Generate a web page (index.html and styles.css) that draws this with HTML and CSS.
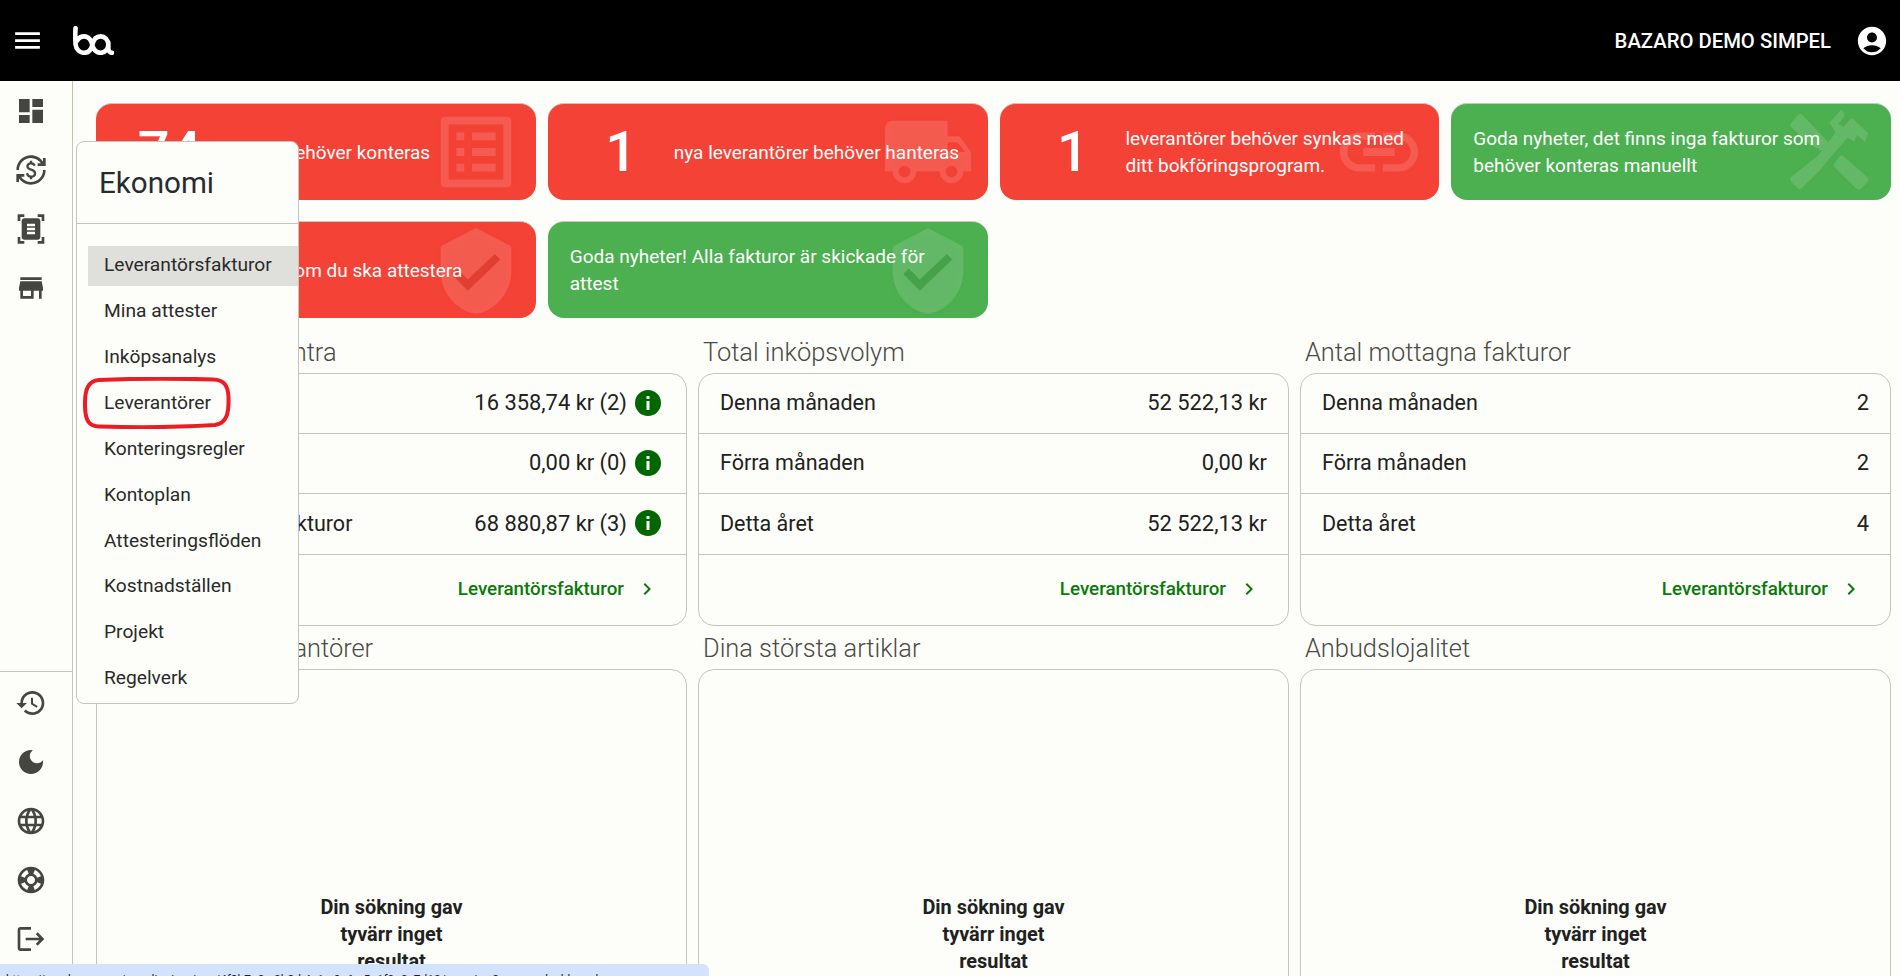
FILE: index.html
```html
<!DOCTYPE html>
<html lang="sv">
<head>
<meta charset="utf-8">
<title>Bazaro</title>
<link rel="stylesheet" href="styles.css">
</head>
<body>
<header class="topbar">
  <svg class="menu-icon" viewBox="0 0 24 24"><path d="M3 18h18v-2H3v2zm0-5h18v-2H3v2zm0-7v2h18V6H3z"/></svg>
  <svg class="logo" viewBox="0 0 40 28"><path d="M2.500 2 C2 8 2.300 14 2.500 18 C3 23 7 26 11 26 C16 26 18 22 19 18 C20 13 23 10 27 10 C31 10 34.500 13.500 34.500 18 C34.500 22.500 31 26 27 26 C23 26 20 23 19 19 C18 14 15 10 11 10 C8 10 5.500 11.500 4 14 M34.500 16 V22 C34.500 24 36 26 38 26"/></svg>
  <div class="spacer"></div>
  <span class="company">BAZARO DEMO SIMPEL</span>
  <svg class="account-icon" viewBox="0 0 24 24"><path d="M12 2C6.48 2 2 6.48 2 12s4.48 10 10 10 10-4.48 10-10S17.52 2 12 2zm0 4c1.93 0 3.5 1.57 3.5 3.5S13.93 13 12 13s-3.5-1.57-3.5-3.5S10.07 6 12 6zm0 14c-2.03 0-4.43-.82-6.14-2.88C7.55 15.8 9.68 15 12 15s4.45.8 6.14 2.12C16.43 19.18 14.03 20 12 20z"/></svg>
</header>

<div class="body-row">
  <aside class="sidebar">
    <nav class="side-group">
      <svg class="side-icon" viewBox="0 0 24 24"><path d="M3 13h8V3H3v10zm0 8h8v-6H3v6zm10 0h8V11h-8v10zm0-18v6h8V3h-8z"/></svg>
      <svg class="side-icon" viewBox="0 0 24 24"><path d="M12.89 11.1c-1.78-.59-2.64-.96-2.64-1.9 0-1.02 1.11-1.39 1.81-1.39 1.31 0 1.79.99 1.9 1.34l1.58-.67c-.15-.44-.82-1.91-2.66-2.23V5h-1.75v1.26c-2.6.56-2.62 2.85-2.62 2.96 0 2.27 2.25 2.91 3.35 3.31 1.58.56 2.28 1.07 2.28 2.03 0 1.13-1.05 1.61-1.98 1.61-1.82 0-2.34-1.87-2.4-2.09l-1.66.67c.63 2.19 2.28 2.78 3.02 2.96V19h1.75v-1.24c.52-.09 3.02-.59 3.02-3.22.01-1.39-.6-2.61-3-3.44zM3 21H1v-6h6v2H4.52c1.61 2.41 4.36 4 7.48 4 4.97 0 9-4.03 9-9h2c0 6.08-4.92 11-11 11-3.72 0-7.01-1.85-9-4.67V21zm-2-9C1 5.92 5.92 1 12 1c3.72 0 7.01 1.85 9 4.67V3h2v6h-6V7h2.48C17.87 4.59 15.12 3 12 3c-4.97 0-9 4.03-9 9H1z"/></svg>
      <svg class="side-icon" viewBox="0 0 24 24"><path fill-rule="evenodd" d="M7 3H4v3H2V1h5v2zm15 3V1h-5v2h3v3h2zM7 21H4v-3H2v5h5v-2zm13-3v3h-3v2h5v-5h-2zM19 18c0 1.1-.9 2-2 2H7c-1.1 0-2-.9-2-2V6c0-1.1.9-2 2-2h10c1.1 0 2 .9 2 2v12zM15 8H9v2h6V8zm0 3H9v2h6v-2zm0 3H9v2h6v-2z"/></svg>
      <svg class="side-icon" viewBox="0 0 24 24"><path d="M20 4H4v2h16V4zm1 10v-2l-1-5H4l-1 5v2h1v6h10v-6h4v6h2v-6h1zm-9 4H6v-4h6v4z"/></svg>
    </nav>
    <nav class="side-group side-bottom">
      <svg class="side-icon" viewBox="0 0 24 24"><path d="M13 3c-4.97 0-9 4.03-9 9H1l3.89 3.89.07.14L9 12H6c0-3.87 3.13-7 7-7s7 3.13 7 7-3.13 7-7 7c-1.93 0-3.68-.79-4.94-2.06l-1.42 1.42C8.27 19.99 10.51 21 13 21c4.97 0 9-4.03 9-9s-4.03-9-9-9zm-1 5v5l4.28 2.54.72-1.21-3.5-2.08V8H12z"/></svg>
      <svg class="side-icon" viewBox="0 0 24 24"><path d="M12 3c-4.97 0-9 4.03-9 9s4.03 9 9 9 9-4.03 9-9c0-.46-.04-.92-.1-1.36-.98 1.37-2.58 2.26-4.4 2.26-2.98 0-5.4-2.42-5.4-5.4 0-1.81.89-3.42 2.26-4.4-.44-.06-.9-.1-1.36-.1z"/></svg>
      <svg class="side-icon" viewBox="0 0 24 24"><path d="M11.99 2C6.47 2 2 6.48 2 12s4.47 10 9.99 10C17.52 22 22 17.52 22 12S17.52 2 11.99 2zm6.93 6h-2.95c-.32-1.25-.78-2.45-1.38-3.56 1.84.63 3.37 1.91 4.33 3.56zM12 4.04c.83 1.2 1.48 2.53 1.91 3.96h-3.82c.43-1.43 1.08-2.76 1.91-3.96zM4.26 14C4.1 13.36 4 12.69 4 12s.1-1.36.26-2h3.38c-.08.66-.14 1.32-.14 2 0 .68.06 1.34.14 2H4.26zm.82 2h2.95c.32 1.25.78 2.45 1.38 3.56-1.84-.63-3.37-1.9-4.33-3.56zm2.95-8H5.08c.96-1.66 2.49-2.93 4.33-3.56C8.81 5.55 8.35 6.75 8.03 8zM12 19.96c-.83-1.2-1.48-2.53-1.91-3.96h3.82c-.43 1.43-1.08 2.76-1.91 3.96zM14.34 14H9.66c-.09-.66-.16-1.32-.16-2 0-.68.07-1.35.16-2h4.68c.09.65.16 1.32.16 2 0 .68-.07 1.34-.16 2zm.25 5.56c.6-1.11 1.06-2.31 1.38-3.56h2.95c-.96 1.65-2.49 2.93-4.33 3.56zM16.36 14c.08-.66.14-1.32.14-2 0-.68-.06-1.34-.14-2h3.38c.16.64.26 1.31.26 2s-.1 1.36-.26 2h-3.38z"/></svg>
      <svg class="side-icon" viewBox="0 0 24 24"><path d="M12 2C6.48 2 2 6.48 2 12s4.48 10 10 10 10-4.48 10-10S17.52 2 12 2zm7.46 7.12l-2.78 1.15c-.51-1.36-1.58-2.44-2.95-2.94l1.15-2.78c2.1.8 3.77 2.47 4.58 4.57zM12 15c-1.66 0-3-1.34-3-3s1.34-3 3-3 3 1.34 3 3-1.34 3-3 3zM9.13 4.54l1.17 2.78c-1.38.5-2.47 1.59-2.98 2.97L4.54 9.13c.81-2.11 2.48-3.78 4.59-4.59zM4.54 14.87l2.78-1.15c.51 1.38 1.59 2.46 2.97 2.96l-1.17 2.78c-2.1-.81-3.77-2.48-4.58-4.59zm10.34 4.59l-1.15-2.78c1.37-.51 2.45-1.59 2.95-2.97l2.78 1.17c-.81 2.1-2.48 3.77-4.58 4.58z"/></svg>
      <svg class="side-icon" viewBox="0 0 24 24"><path d="M17 7l-1.41 1.41L18.17 11H8v2h10.17l-2.58 2.58L17 17l5-5zM4 5h8V3H4c-1.1 0-2 .9-2 2v14c0 1.1.9 2 2 2h8v-2H4V5z"/></svg>
    </nav>
  </aside>

  <main class="content">
    <section class="cards">
      <article class="card red">
        <svg class="card-icon" viewBox="0 0 24 24"><path d="M19 5v14H5V5h14m1.1-2H3.9c-.5 0-.9.4-.9.9v16.2c0 .4.4.9.9.9h16.2c.4 0 .9-.5.9-.9V3.9c0-.5-.5-.9-.9-.9zM11 7h6v2h-6V7zm0 4h6v2h-6v-2zm0 4h6v2h-6zM7 7h2v2H7zm0 4h2v2H7zm0 4h2v2H7z"/></svg>
        <span class="num">74</span><p class="card-text indent">fakturor behöver konteras</p>
      </article>
      <article class="card red">
        <svg class="card-icon" viewBox="0 0 24 24"><path d="M20 8h-3V4H3c-1.1 0-2 .9-2 2v11h2c0 1.66 1.34 3 3 3s3-1.34 3-3h6c0 1.66 1.34 3 3 3s3-1.34 3-3h2v-5l-3-4zM6 18.5c-.83 0-1.5-.67-1.5-1.5s.67-1.5 1.5-1.5 1.5.67 1.5 1.5-.67 1.5-1.5 1.5zm13.5-9l1.96 2.5H17V9.5h2.5zm-1.5 9c-.83 0-1.5-.67-1.5-1.5s.67-1.5 1.5-1.5 1.5.67 1.5 1.5-.67 1.5-1.5 1.5z"/></svg>
        <span class="num">1</span><p class="card-text">nya leverantörer behöver hanteras</p>
      </article>
      <article class="card red">
        <svg class="card-icon" viewBox="0 0 24 24"><path d="M3.9 12c0-1.71 1.39-3.1 3.1-3.1h4V7H7c-2.76 0-5 2.24-5 5s2.24 5 5 5h4v-1.9H7c-1.71 0-3.1-1.39-3.1-3.1zM8 13h8v-2H8v2zm9-6h-4v1.9h4c1.71 0 3.1 1.39 3.1 3.1s-1.39 3.1-3.1 3.1h-4V17h4c2.76 0 5-2.24 5-5s-2.24-5-5-5z"/></svg>
        <span class="num">1</span><p class="card-text">leverantörer behöver synkas med ditt bokföringsprogram.</p>
      </article>
      <article class="card green">
        <svg class="card-icon" viewBox="0 0 24 24"><path d="M14.700 1.100 15.600 2.800 13.900 4.800 15.200 5.600 17.300 3.200 21.500 7.200 20.700 9.400 18.700 7.700 17.900 9.400 16.200 8.300 11.300 14 9.600 16.200 4.600 21.200Q4 21.800 3.400 21.200L1.800 19.600Q1.200 19 1.800 18.400L8.800 12.800 13.200 7 11.600 4.500zM1.800 4.500 3.600 2.500Q4.100 2 4.600 2.500L9 7 11.700 10 10.200 12 6.500 10 1.800 5.600Q1.300 5 1.800 4.500zM14.200 13.100Q14.700 12.600 15.200 13.100L21.400 18.600Q21.800 19.100 21.400 19.600L19.600 21.400Q19 21.900 18.500 21.400L12.900 15.900Q12.400 15.300 12.900 14.900z"/></svg>
        <p class="card-text full">Goda nyheter, det finns inga fakturor som behöver konteras manuellt</p>
      </article>
      <article class="card red">
        <svg class="card-icon" viewBox="0 0 24 24"><path fill-rule="evenodd" d="M12 1.300 3 6v6.500c0 5 3.800 9.800 9 10.700 5.200-.9 9-5.700 9-10.700V6zM5.700 13 7.100 11.600 9.900 14.400 16.800 7.900 18.200 9.300 9.900 17.300z"/><path class="check" d="M5.700 13 7.100 11.600 9.900 14.400 16.800 7.900 18.200 9.300 9.900 17.300z"/></svg>
        <span class="num">2</span><p class="card-text indent">fakturor som du ska attestera</p>
      </article>
      <article class="card green">
        <svg class="card-icon" viewBox="0 0 24 24"><path fill-rule="evenodd" d="M12 1.300 3 6v6.500c0 5 3.800 9.800 9 10.700 5.200-.9 9-5.700 9-10.700V6zM5.700 13 7.100 11.600 9.900 14.400 16.800 7.900 18.200 9.300 9.900 17.300z"/><path class="check" d="M5.700 13 7.100 11.600 9.900 14.400 16.800 7.900 18.200 9.300 9.900 17.300z"/></svg>
        <p class="card-text full">Goda nyheter! Alla fakturor är skickade för attest</p>
      </article>
    </section>

    <section class="panels">
      <div class="panel-col">
        <h2 class="panel-title">Leverantörsreskontra</h2>
        <div class="panel">
          <div class="row"><span>Förfallet</span><span class="val">16 358,74 kr (2)<svg class="info" viewBox="0 0 26 26"><circle cx="13" cy="13" r="13"/><rect class="info-i" x="11.500" y="11" width="3" height="9"/><rect class="info-i" x="11.500" y="6" width="3" height="3"/></svg></span></div>
          <div class="row"><span>Inom 30 dagar</span><span class="val">0,00 kr (0)<svg class="info" viewBox="0 0 26 26"><circle cx="13" cy="13" r="13"/><rect class="info-i" x="11.500" y="11" width="3" height="9"/><rect class="info-i" x="11.500" y="6" width="3" height="3"/></svg></span></div>
          <div class="row"><span>Totalt ej betalda fakturor</span><span class="val">68 880,87 kr (3)<svg class="info" viewBox="0 0 26 26"><circle cx="13" cy="13" r="13"/><rect class="info-i" x="11.500" y="11" width="3" height="9"/><rect class="info-i" x="11.500" y="6" width="3" height="3"/></svg></span></div>
          <div class="foot"><a class="foot-link">Leverantörsfakturor<svg class="chev" viewBox="0 0 24 24"><path d="M10 6 8.590 7.410 13.170 12l-4.580 4.590L10 18l6-6z"/></svg></a></div>
        </div>
      </div>
      <div class="panel-col">
        <h2 class="panel-title">Total inköpsvolym</h2>
        <div class="panel">
          <div class="row"><span>Denna månaden</span><span class="val">52 522,13 kr</span></div>
          <div class="row"><span>Förra månaden</span><span class="val">0,00 kr</span></div>
          <div class="row"><span>Detta året</span><span class="val">52 522,13 kr</span></div>
          <div class="foot"><a class="foot-link">Leverantörsfakturor<svg class="chev" viewBox="0 0 24 24"><path d="M10 6 8.590 7.410 13.170 12l-4.580 4.590L10 18l6-6z"/></svg></a></div>
        </div>
      </div>
      <div class="panel-col">
        <h2 class="panel-title">Antal mottagna fakturor</h2>
        <div class="panel">
          <div class="row"><span>Denna månaden</span><span class="val">2</span></div>
          <div class="row"><span>Förra månaden</span><span class="val">2</span></div>
          <div class="row"><span>Detta året</span><span class="val">4</span></div>
          <div class="foot"><a class="foot-link">Leverantörsfakturor<svg class="chev" viewBox="0 0 24 24"><path d="M10 6 8.590 7.410 13.170 12l-4.580 4.590L10 18l6-6z"/></svg></a></div>
        </div>
      </div>
      <div class="panel-col">
        <h2 class="panel-title">Dina största leverantörer</h2>
        <div class="panel tall"><p class="empty">Din sökning gav tyvärr inget resultat</p></div>
      </div>
      <div class="panel-col">
        <h2 class="panel-title">Dina största artiklar</h2>
        <div class="panel tall"><p class="empty">Din sökning gav tyvärr inget resultat</p></div>
      </div>
      <div class="panel-col">
        <h2 class="panel-title">Anbudslojalitet</h2>
        <div class="panel tall"><p class="empty">Din sökning gav tyvärr inget resultat</p></div>
      </div>
    </section>
  </main>
</div>

<div class="flyout">
  <h3 class="flyout-title">Ekonomi</h3>
  <ul class="flyout-list">
    <li class="active">Leverantörsfakturor</li>
    <li>Mina attester</li>
    <li>Inköpsanalys</li>
    <li>Leverantörer</li>
    <li>Konteringsregler</li>
    <li>Kontoplan</li>
    <li>Attesteringsflöden</li>
    <li class="short">Kostnadställen</li>
    <li>Projekt</li>
    <li>Regelverk</li>
  </ul>
</div>
<svg class="ring" viewBox="0 0 148 52"><path d="M16 3 C50 1.500 100 1.500 130 2.500 C141 3 145 8 145.500 20 C146 36 144 46 132 48 C100 50 50 50.500 16 49.500 C6 49 2.500 44 2 30 C1.500 12 5 4 16 3z"/></svg>
<div class="status-bubble">https://app.bazaro.se/supplier-invoices/4f8b7c2a-0b3d-4c1e-9e6a-5a1f0c2e7d10/overview?source=dashboard</div>
</body>
</html>
```
FILE: styles.css
```css
* { box-sizing: border-box; }
html, body { margin: 0; height: 100%; overflow: hidden; }
body { background: #fdfef9; font-family: Roboto, "Liberation Sans", sans-serif; color: #212121; }

.topbar { height: 81px; background: #000; display: flex; align-items: center; padding: 0 11px; }
.menu-icon { width: 33px; height: 33px; fill: #fff; }
.logo { width: 41px; height: 29px; margin-left: 29px; fill: none; stroke: #fff; stroke-width: 4.5; stroke-linecap: round; }
.spacer { flex: 1; }
.company { color: #fff; font-size: 20.3px; font-weight: 500; margin-right: 24px; }
.account-icon { width: 34px; height: 34px; fill: #fff; }

.body-row { display: flex; height: 895px; }
.sidebar { width: 73px; flex: none; border-right: 1px solid #c4c6bc; border-image: linear-gradient(#b7c7a7 60px, #c4c6bc 60px) 1; display: flex; flex-direction: column; justify-content: space-between; }
.side-group { display: flex; flex-direction: column; align-items: flex-start; gap: 27px; padding: 14px 0 0 15px; }
.side-bottom { border-top: 1px solid #c4c6bc; padding-top: 15px; padding-bottom: 21px; }
.side-icon { width: 32px; height: 32px; fill: #45463f; flex: none; }

.content { flex: 1; padding: 22px 9px 0 23px; overflow: hidden; }
.cards { display: grid; grid-template-columns: repeat(4, 1fr); gap: 21px 12px; }
.card { position: relative; height: 97px; border-radius: 16px; border-top: 1px solid #c9c9bc; display: flex; align-items: center; color: #fff; overflow: hidden; }
.red { background: #f44336; }
.green { background: #4caf50; }
.num { flex: none; width: 147px; margin-right: -21px; text-align: center; font-size: 56px; font-weight: 500; line-height: 1; position: relative; }
.card-text { margin: 0; font-size: 19px; font-weight: 400; line-height: 27px; width: 300px; position: relative; }
.card-text.indent { margin-left: -9px; }
.card-text.full { margin-left: 22px; width: 380px; }
.card-icon { position: absolute; right: 13px; top: 1px; width: 94px; height: 94px; fill: rgba(255,255,255,.13); filter: drop-shadow(0 0 6px rgba(0,0,0,.06)); }
.card-icon .check { fill: rgba(0,0,0,.07); }

.panels { display: grid; grid-template-columns: repeat(3, 1fr); gap: 5px 11px; margin-top: 17px; }
.panel-title { margin: 0 0 3px; font-size: 25.4px; font-weight: 300; line-height: 35px; color: #4a4a45; padding-left: 5px; }
.panel { border: 1px solid #c4c6bc; border-radius: 16px; display: flex; flex-direction: column; }
.panel.tall { height: 400px; display: block; position: relative; }
.row { height: 60px; display: flex; justify-content: space-between; align-items: center; padding: 0 21px 2px; border-bottom: 1px solid #c4c6bc; font-size: 21.5px; }
.row:nth-child(3) { height: 61px; }
.val { display: inline-flex; align-items: center; gap: 8px; font-size: 21.9px; font-weight: 450; }
.info { width: 26px; height: 26px; fill: #006600; margin-right: 4px; }
.info-i { fill: #fdfef9; }
.foot { height: 70px; display: flex; align-items: center; justify-content: flex-end; padding: 0 27px 2px 21px; }
.foot-link { display: inline-flex; align-items: center; gap: 11px; color: #0a7a0a; font-size: 18.8px; font-weight: 500; }
.chev { width: 24px; height: 24px; fill: #0a7a0a; }
.empty { position: absolute; top: 224px; left: 50%; transform: translateX(-50%); margin: 0; width: 168px; text-align: center; font-weight: 700; font-size: 19.9px; line-height: 27px; }

.flyout { position: absolute; z-index: 10; left: 76px; top: 141px; width: 223px; height: 563px; background: #fdfef9; border: 1px solid #c4c6bc; border-radius: 8px; }
.flyout-title { margin: 0; height: 82px; display: flex; align-items: center; padding-left: 22px; font-size: 29.6px; font-weight: 400; color: #272b30; border-bottom: 1px solid #c4c6bc; }
.flyout-list { list-style: none; margin: 22px 0 0 11px; padding: 0; }
.flyout-list li { height: 46px; display: flex; align-items: center; padding: 0 0 4px 16px; font-size: 19.2px; color: #2a2a2a; }
.flyout-list li.active { height: 40px; background: #dfe0db; margin-bottom: 3px; }
.flyout-list li.short { height: 45px; }
.ring { position: absolute; z-index: 11; left: 83px; top: 377px; width: 148px; height: 52px; fill: none; stroke: #ed1c24; stroke-width: 4; }
.status-bubble { position: absolute; z-index: 12; left: 0; bottom: 0; width: 709px; height: 12px; background: #d3e3fd; border-top-right-radius: 6px; font-size: 12px; line-height: 16px; padding: 8px 0 0 6px; overflow: hidden; white-space: nowrap; color: #1f1f1f; }
```
